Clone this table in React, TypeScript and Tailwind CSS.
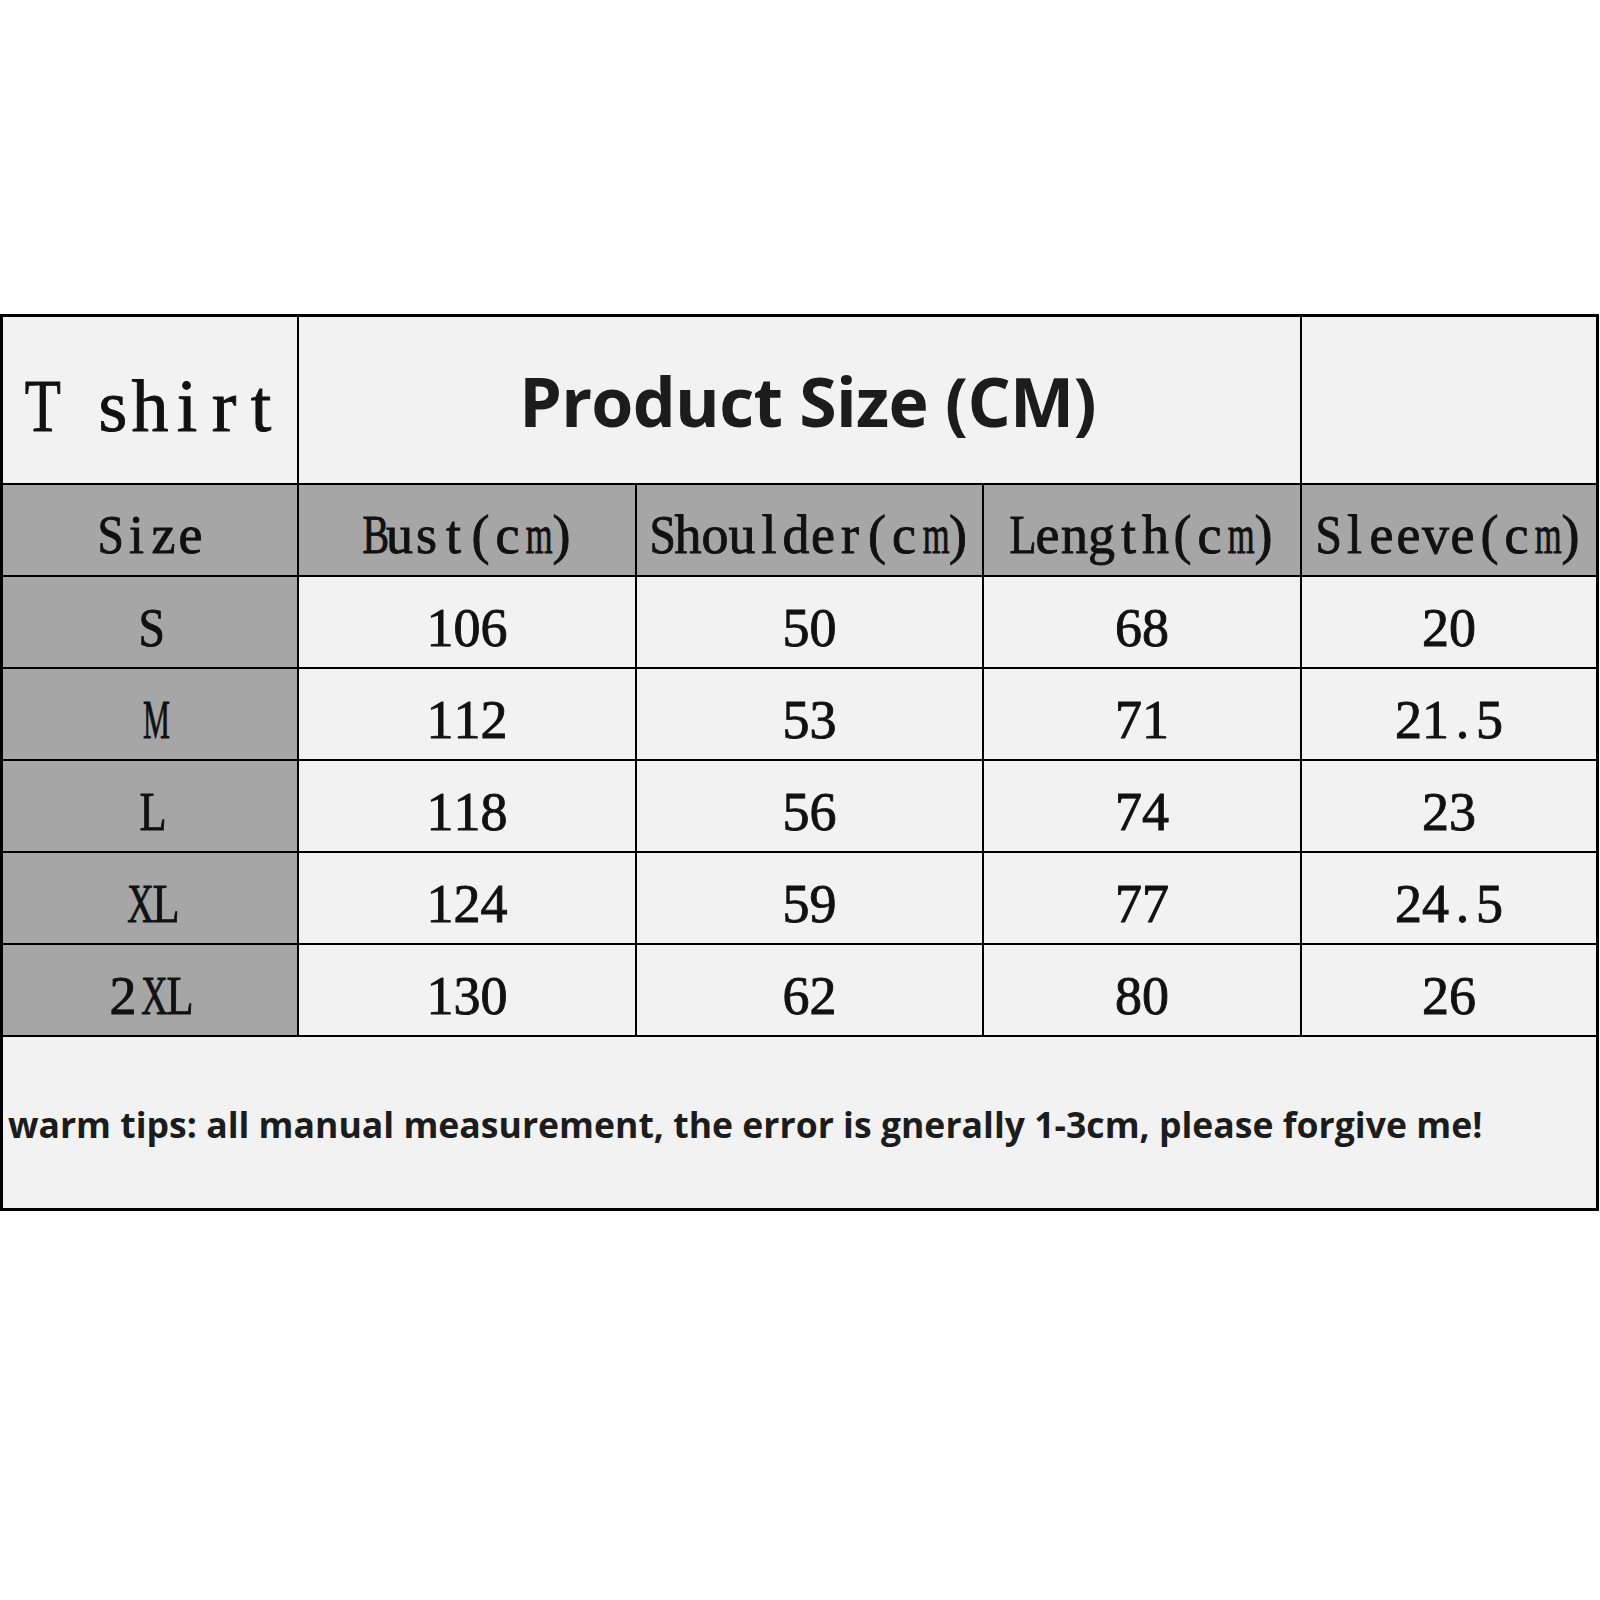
import React from "react";

// SimSun-style half-width cells: each glyph gets 0.5em, wide ones are squeezed
const squeeze: Record<string, string> = {
  m: "scale-x-[0.64]",
  M: "scale-x-[0.56]",
  X: "scale-x-[0.68]",
  B: "scale-x-[0.74]",
  T: "scale-x-[0.8]",
  L: "scale-x-[0.82]",
  S: "scale-x-[0.88]",
};

function Mono({ text }: { text: string }) {
  return (
    <span className="inline-flex">
      {[...text].map((ch, i) => (
        <span key={i} className={`inline-block w-[0.5em] text-center ${squeeze[ch] ?? ""}`}>
          {ch === " " ? "\u00a0" : ch}
        </span>
      ))}
    </span>
  );
}

const headers = ["Size", "Bust(cm)", "Shoulder(cm)", "Length(cm)", "Sleeve(cm)"];

const rows = [
  ["S", "106", "50", "68", "20"],
  ["M", "112", "53", "71", "21.5"],
  ["L", "118", "56", "74", "23"],
  ["XL", "124", "59", "77", "24.5"],
  ["2XL", "130", "62", "80", "26"],
];

const serif =
  "font-['Liberation_Serif',serif] text-[54px] leading-none text-[#111] [-webkit-text-stroke:0.9px_#111]";
const sans = "font-['Open_Sans','Noto_Sans',sans-serif] font-bold text-[#1c1c1c]";

export default function App() {
  return (
    <div className="min-h-[1600px] w-[1600px] bg-white pt-[314px]">
      <div className="grid w-[1599px] grid-cols-[294px_336px_345px_316px_1fr] grid-rows-[166px_90px_90px_90px_90px_90px_90px_171px] gap-[2px] border-[3px] border-black bg-black">
        {/* title row */}
        <div className="flex items-center justify-center bg-[#f2f2f2] pt-[12px]">
          <span className="font-['Liberation_Serif',serif] text-[74px] leading-none text-[#111] [-webkit-text-stroke:0.9px_#111]">
            <Mono text="T shirt" />
          </span>
        </div>
        <div className="col-span-3 flex items-center justify-center bg-[#f2f2f2] pl-[16px] pt-[2px]">
          <span className={`${sans} text-[68px] leading-none tracking-[-0.01em]`}>Product Size (CM)</span>
        </div>
        <div className="bg-[#f2f2f2]" />

        {/* column headers */}
        {headers.map((h) => (
          <div key={h} className="flex items-center justify-center bg-[#a6a6a6] pt-[10px]">
            <span className={serif}>
              <Mono text={h} />
            </span>
          </div>
        ))}

        {/* measurements */}
        {rows.map((r) =>
          r.map((v, i) => (
            <div
              key={r[0] + i}
              className={`flex items-center justify-center pt-[12px] ${i === 0 ? "bg-[#a6a6a6]" : "bg-[#f2f2f2]"}`}
            >
              <span className={serif}>
                <Mono text={v} />
              </span>
            </div>
          ))
        )}

        {/* footer note */}
        <div className="col-span-5 flex items-center bg-[#f2f2f2] pl-[5px] pt-[4px]">
          <span className={`${sans} text-[35.6px] leading-none`}>
            warm tips: all manual measurement, the error is gnerally 1-3cm, please forgive me!
          </span>
        </div>
      </div>
    </div>
  );
}
